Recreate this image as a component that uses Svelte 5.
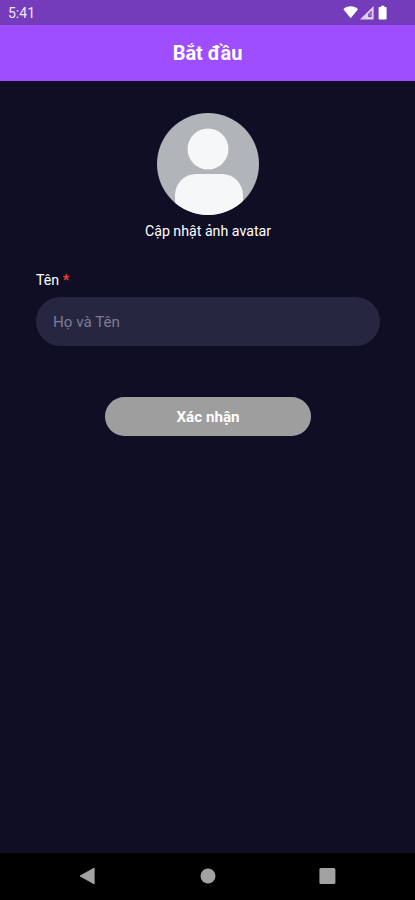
<script lang="ts">
  let name = $state('');
</script>

<div class="screen">
  <div class="status-bar">
    <span class="time">5:41</span>
    <svg class="status-icons" width="46" height="16" viewBox="0 0 46 16">
      <path d="M0.4 4.2C4.2 0.4 11.2 0.4 15 4.2L7.7 13.2z" fill="#fff" />
      <path d="M17 14.5L30.6 1V14.5z" fill="#fff" fill-opacity="0.76" />
      <path d="M26.6 7.4L28.6 5.6V12H25.2V9z" fill="#743bbb" />
      <rect x="26.6" y="7.6" width="1" height="3" fill="#fff" fill-opacity="0.5" />
      <path d="M38 0.8h3.4v1.2h1.4q0.8 0 0.8 0.8V13.8q0 0.8-0.8 0.8H36.4q-0.8 0-0.8-0.8V2.8q0-0.8 0.8-0.8H38z" fill="#fff" />
    </svg>
  </div>

  <header class="header">
    <h1>Bắt đầu</h1>
  </header>

  <main class="content">
    <button class="avatar" type="button">
      <svg width="102" height="102" viewBox="0 0 102 102">
        <defs>
          <clipPath id="avatar-clip"><circle cx="51" cy="51" r="51" /></clipPath>
        </defs>
        <g clip-path="url(#avatar-clip)">
          <rect width="102" height="102" fill="#b1b4b9" />
          <circle cx="51" cy="36" r="20.5" fill="#f5f7f8" />
          <rect x="18" y="61" width="68" height="60" rx="21" fill="#f5f7f8" />
        </g>
      </svg>
      <span class="caption">Cập nhật ảnh avatar</span>
    </button>

    <form class="form">
      <label for="name">Tên <span class="required">*</span></label>
      <input id="name" type="text" placeholder="Họ và Tên" bind:value={name} />
      <button class="submit" type="button">Xác nhận</button>
    </form>
  </main>

  <nav class="nav-bar">
    <svg width="18" height="18" viewBox="0 0 18 18">
      <path d="M1 9L15.2 1V17z" fill="#a2a2a2" stroke="#a2a2a2" stroke-width="0.8" stroke-linejoin="round" />
    </svg>
    <svg width="18" height="18" viewBox="0 0 18 18">
      <circle cx="9" cy="9" r="7.5" fill="#a2a2a2" />
    </svg>
    <svg width="18" height="18" viewBox="0 0 18 18">
      <rect x="1.4" y="1" width="16" height="16" rx="1.5" fill="#a2a2a2" />
    </svg>
  </nav>
</div>

<style>
  :global(body) {
    margin: 0;
    background: #100e24;
  }

  .screen {
    display: flex;
    flex-direction: column;
    height: 900px;
    background: #100e24;
    color: #fff;
    font-family: Roboto, sans-serif;
  }

  .status-bar {
    display: flex;
    align-items: center;
    justify-content: space-between;
    box-sizing: border-box;
    height: 25px;
    padding: 1px 26px 0 8px;
    background: #743bbb;
  }

  .time {
    font-size: 14px;
    color: #f0e6fa;
  }

  .header {
    display: flex;
    align-items: center;
    justify-content: center;
    height: 56px;
    background: #9e4dff;
  }

  h1 {
    margin: 0;
    font-size: 20px;
    font-weight: 700;
    line-height: 24px;
  }

  .content {
    display: flex;
    flex: 1;
    flex-direction: column;
    padding: 32px 35px 0 36px;
  }

  button {
    border: 0;
    font-family: inherit;
    color: inherit;
  }

  .avatar {
    display: flex;
    flex-direction: column;
    align-items: center;
    align-self: center;
    padding: 0;
    background: none;
  }

  .caption {
    margin-top: 6px;
    font-size: 14.2px;
    line-height: 20px;
  }

  .form {
    display: flex;
    flex-direction: column;
    margin-top: 29px;
  }

  label {
    font-size: 14.2px;
    line-height: 20px;
  }

  .required {
    color: #f4402f;
    font-weight: 700;
  }

  input {
    height: 49px;
    margin-top: 7px;
    padding: 0 17px;
    box-sizing: border-box;
    border: 0;
    border-radius: 25px;
    outline: none;
    background: #272641;
    color: #fff;
    font-family: inherit;
    font-size: 15.2px;
  }

  input::placeholder {
    color: #7d7b93;
    opacity: 1;
  }

  .submit {
    align-self: center;
    width: 206px;
    height: 39px;
    margin-top: 51px;
    padding: 0;
    border-radius: 20px;
    background: #9e9e9e;
    font-size: 15.2px;
    font-weight: 700;
  }

  .nav-bar {
    display: flex;
    align-items: center;
    justify-content: space-between;
    box-sizing: border-box;
    height: 47px;
    padding: 0 79px 1px;
    background: #000;
  }
</style>
